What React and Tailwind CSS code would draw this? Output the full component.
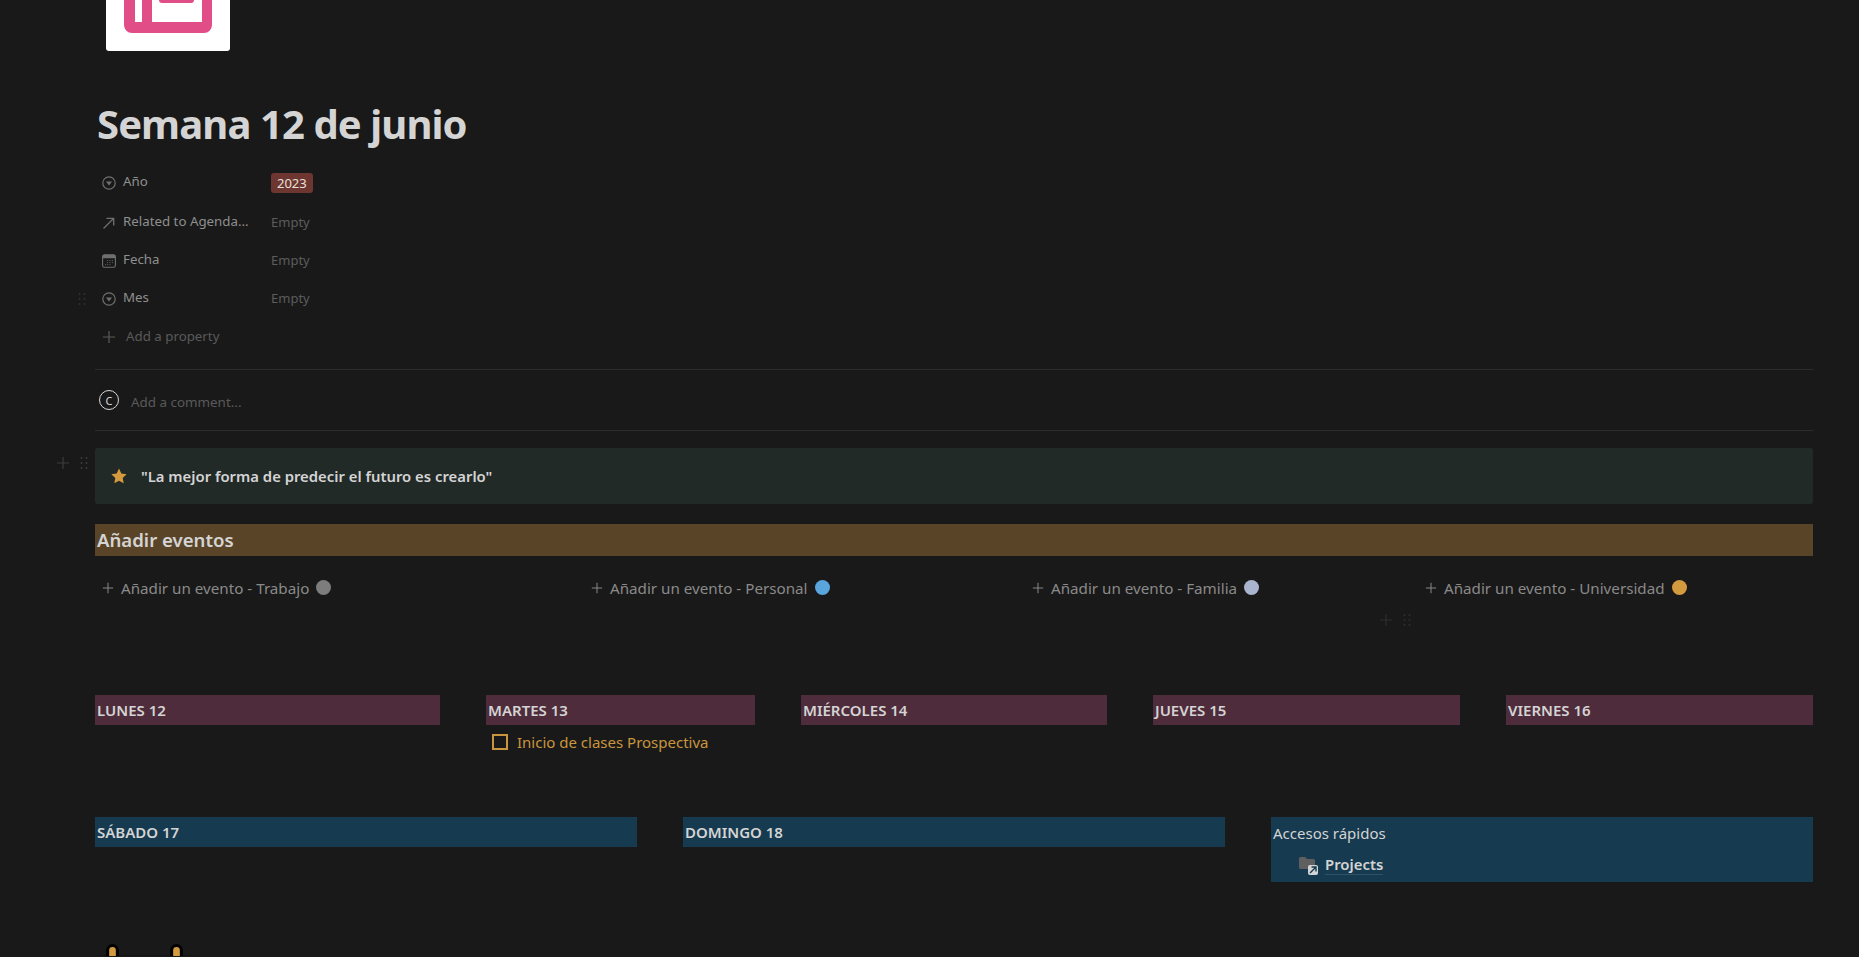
import React from "react";

const FONT = "font-['Noto_Sans','Open_Sans',sans-serif]";

function Plus({ className = "" }) {
  return (
    <svg viewBox="0 0 14 14" className={className} fill="none" stroke="currentColor" strokeWidth="1.2">
      <path d="M7 1v12M1 7h12" />
    </svg>
  );
}

function Grip({ className = "" }) {
  return (
    <svg viewBox="0 0 8 14" className={className} fill="currentColor">
      <circle cx="1.5" cy="2" r="1" />
      <circle cx="6.5" cy="2" r="1" />
      <circle cx="1.5" cy="7" r="1" />
      <circle cx="6.5" cy="7" r="1" />
      <circle cx="1.5" cy="12" r="1" />
      <circle cx="6.5" cy="12" r="1" />
    </svg>
  );
}

function SelectIcon() {
  return (
    <svg viewBox="0 0 14 14" className="w-3.5 h-3.5 shrink-0" fill="none">
      <circle cx="7" cy="7" r="6.2" stroke="#6f6f6f" strokeWidth="1.2" />
      <path d="M3.9 5.4h6.2L7 9.4z" fill="#6f6f6f" />
    </svg>
  );
}

function ArrowIcon() {
  return (
    <svg viewBox="0 0 14 14" className="w-3.5 h-3.5 shrink-0" fill="none" stroke="#6f6f6f" strokeWidth="1.3">
      <path d="M1.5 12.5L11.5 2.5M4.5 2.3h7.2V9.5" />
    </svg>
  );
}

function CalendarIcon() {
  return (
    <svg viewBox="0 0 14 14" className="w-3.5 h-3.5 shrink-0" fill="none">
      <rect x="0.6" y="0.8" width="12.8" height="12.4" rx="1.8" stroke="#6f6f6f" strokeWidth="1.1" />
      <path d="M0.6 2.6a1.8 1.8 0 0 1 1.8-1.8h9.2a1.8 1.8 0 0 1 1.8 1.8v1.6H0.6z" fill="#6f6f6f" />
      <path d="M5 6.5h1.2M7.4 6.5h1.2M9.8 6.5H11M5 8.6h1.2M7.4 8.6h1.2M9.8 8.6H11M3 10.6h1.2M5 10.6h1.2M7.4 10.6h1.2" stroke="#565656" strokeWidth="1" />
    </svg>
  );
}

function Prop({ icon, label, grip, className = "", children }) {
  return (
    <div className={`relative flex items-center h-[38px] ${className}`}>
      {grip && <Grip className="absolute left-[-17px] top-[12px] w-2 h-3.5 text-[#303030]" />}
      <div className="flex items-center w-[176px] pl-[7px] text-[13.3px] text-[#8f8f8f] shrink-0">
        {icon}
        <span className="ml-[7px] mb-[2px] whitespace-nowrap">{label}</span>
      </div>
      {children}
    </div>
  );
}

function Empty() {
  return <span className="text-[13px] text-[#5c5c5c]">Empty</span>;
}

function EventButton({ label, dot, className }) {
  return (
    <div className={`flex items-center text-[15.2px] text-[#8a8a8a] ${className}`}>
      <Plus className="w-3 h-3 mr-[7px] shrink-0 text-[#868686]" />
      <span className="whitespace-nowrap">{label}</span>
      <span className={`w-[15px] h-[15px] rounded-full ml-[7px] shrink-0 ${dot}`} />
    </div>
  );
}

function DayBar({ label, className = "", children }) {
  return (
    <div className={className}>
      <div className="h-[30px] bg-[#4f2c3b] flex items-center pl-[2px] text-[15px] font-semibold text-[#d4d4d4]">{label}</div>
      {children}
    </div>
  );
}

export default function App() {
  return (
    <div className={`h-[957px] w-full overflow-hidden bg-[#191919] pl-[95px] pr-[46px] ${FONT}`}>
      {/* page icon, its top cut by the scroll */}
      <div className="ml-[11px] w-[124px] h-[51px] bg-white rounded-b-[3px] overflow-hidden">
        <svg viewBox="0 0 124 51" className="w-[124px] h-[51px]">
          <path d="M18 -5V25a8 8 0 0 0 8 8H98a8 8 0 0 0 8-8V-5H96V22H29V-5Z" fill="#e14e87" />
          <rect x="36" y="-5" width="10" height="27" fill="#e14e87" />
          <path d="M53 -5V0a3 3 0 0 0 3 3H85a3 3 0 0 0 3-3V-5Z" fill="#e14e87" />
        </svg>
      </div>

      <h1 className="mt-[47px] ml-[2px] text-[40px] leading-[52px] font-bold text-[#d4d4d4] tracking-[-0.9px]">Semana 12 de junio</h1>

      <div className="mt-[16px]">
        <Prop icon={<SelectIcon />} label="Año" className="pb-[5px]">
          <span className="h-5 px-[6px] bg-[#6e3630] rounded-[3px] text-[13px] leading-5 text-[#e6e0dc]">2023</span>
        </Prop>
        <Prop icon={<ArrowIcon />} label="Related to Agenda..."><Empty /></Prop>
        <Prop icon={<CalendarIcon />} label="Fecha"><Empty /></Prop>
        <Prop icon={<SelectIcon />} label="Mes" grip><Empty /></Prop>
        <div className="flex items-center h-[38px] pl-[7px] text-[13.3px] text-[#5a5a5a]">
          <Plus className="w-3.5 h-3.5 text-[#5a5a5a]" />
          <span className="ml-[10px]">Add a property</span>
        </div>
      </div>

      <div className="mt-[13px] border-t border-[#2c2c2c] h-[61px] flex items-center pl-[4px]">
        <span className="w-5 h-5 rounded-full border border-[#d8d8d8] flex items-center justify-center text-[11px] text-[#d8d8d8] leading-none">C</span>
        <span className="ml-[12px] text-[13.4px] text-[#5a5a5a] mt-[4px]">Add a comment...</span>
      </div>
      <div className="border-t border-[#2c2c2c]" />

      <div className="relative mt-[17px] h-[56px] bg-[#222a27] rounded-[3px] flex items-center pl-[16px]">
        <Plus className="absolute left-[-39px] top-[8px] w-3.5 h-3.5 text-[#3d3d3d]" />
        <Grip className="absolute left-[-15px] top-[8px] w-2 h-3.5 text-[#3d3d3d]" />
        <svg viewBox="0 0 16 16" className="w-4 h-4 shrink-0">
          <path d="M8 .6l2.3 4.9 5.3.7-3.9 3.7 1 5.4L8 12.7l-4.7 2.6 1-5.4L.4 6.2l5.3-.7z" fill="#d69a3e" />
        </svg>
        <span className="ml-[14px] text-[14.85px] font-semibold text-[#d4d4d4]">"La mejor forma de predecir el futuro es crearlo"</span>
      </div>

      <div className="mt-[20px] h-8 bg-[#5a4428] flex items-center pl-[2px] text-[18.6px] font-semibold text-[#d4d4d4]">Añadir eventos</div>

      <div className="relative mt-[20px] h-[24px] flex items-center">
        <EventButton label="Añadir un evento - Trabajo" dot="bg-[#7d7d7d]" className="pl-[7px] w-[496px]" />
        <EventButton label="Añadir un evento - Personal" dot="bg-[#5aa5dc]" className="w-[441px]" />
        <EventButton label="Añadir un evento - Familia" dot="bg-[#a9b4cf]" className="w-[393px]" />
        <EventButton label="Añadir un evento - Universidad" dot="bg-[#d39a3e]" />
        <Plus className="absolute left-[1284px] top-[37px] w-3.5 h-3.5 text-[#2e2e2e]" />
        <Grip className="absolute left-[1308px] top-[37px] w-2 h-3.5 text-[#2e2e2e]" />
      </div>

      <div className="mt-[95px] flex gap-[46px]">
        <DayBar label="LUNES 12" className="w-[345px]" />
        <DayBar label="MARTES 13" className="w-[269px]">
          <div className="mt-[9px] pl-[6px] h-4 flex items-center text-[15px] text-[#c9953f]">
            <span className="w-4 h-4 border-2 border-[#c9953f] shrink-0" />
            <span className="ml-[9px] whitespace-nowrap">Inicio de clases Prospectiva</span>
          </div>
        </DayBar>
        <DayBar label="MIÉRCOLES 14" className="w-[306px]" />
        <DayBar label="JUEVES 15" className="w-[307px]" />
        <DayBar label="VIERNES 16" className="w-[307px]" />
      </div>

      <div className="mt-[67px] grid grid-cols-3 gap-[46px] items-start">
        <div className="h-[30px] bg-[#163a4f] flex items-center pl-[2px] text-[15px] font-semibold text-[#d4d4d4]">SÁBADO 17</div>
        <div className="h-[30px] bg-[#163a4f] flex items-center pl-[2px] text-[15px] font-semibold text-[#d4d4d4]">DOMINGO 18</div>
        <div className="h-[65px] bg-[#163a4f] pl-[2px] text-[#d4d4d4]">
          <div className="h-[32px] flex items-center text-[15px]">Accesos rápidos</div>
          <div className="flex items-center pl-[26px] h-[24px] mt-[4px]">
            <svg viewBox="0 0 20 19" className="w-5 h-[19px] shrink-0" fill="none">
              <path d="M0 2.5A1.5 1.5 0 0 1 1.5 1H6l2 2h6.5A1.5 1.5 0 0 1 16 4.5V13H1.5A1.5 1.5 0 0 1 0 11.5z" fill="#5f5f5f" />
              <rect x="9" y="9" width="10" height="10" rx="2" fill="#d4d4d4" />
              <path d="M11 17l5.5-5.5M12.5 11h4.5v4.5" stroke="#163a4f" strokeWidth="1.4" />
            </svg>
            <span className="ml-[6px] text-[14.9px] font-semibold border-b border-[#2f5264] leading-[19px]">Projects</span>
          </div>
        </div>
      </div>

      <div className="mt-[62px] ml-[3px] w-[96px] h-[12px]">
        <svg viewBox="0 0 96 12" className="w-[96px] h-[12px]" fill="none">
          <path d="M9.65 14V6.35a4.85 4.85 0 0 1 9.7 0V14" fill="#d39a3e" stroke="#000" strokeWidth="3" />
          <path d="M73.65 14V6.35a4.85 4.85 0 0 1 9.7 0V14" fill="#d39a3e" stroke="#000" strokeWidth="3" />
          <path d="M0 11.5h8M21 11.5h51M85 11.5h11" stroke="#000" strokeOpacity="0.35" strokeWidth="1" strokeDasharray="1 1" />
        </svg>
      </div>
    </div>
  );
}
